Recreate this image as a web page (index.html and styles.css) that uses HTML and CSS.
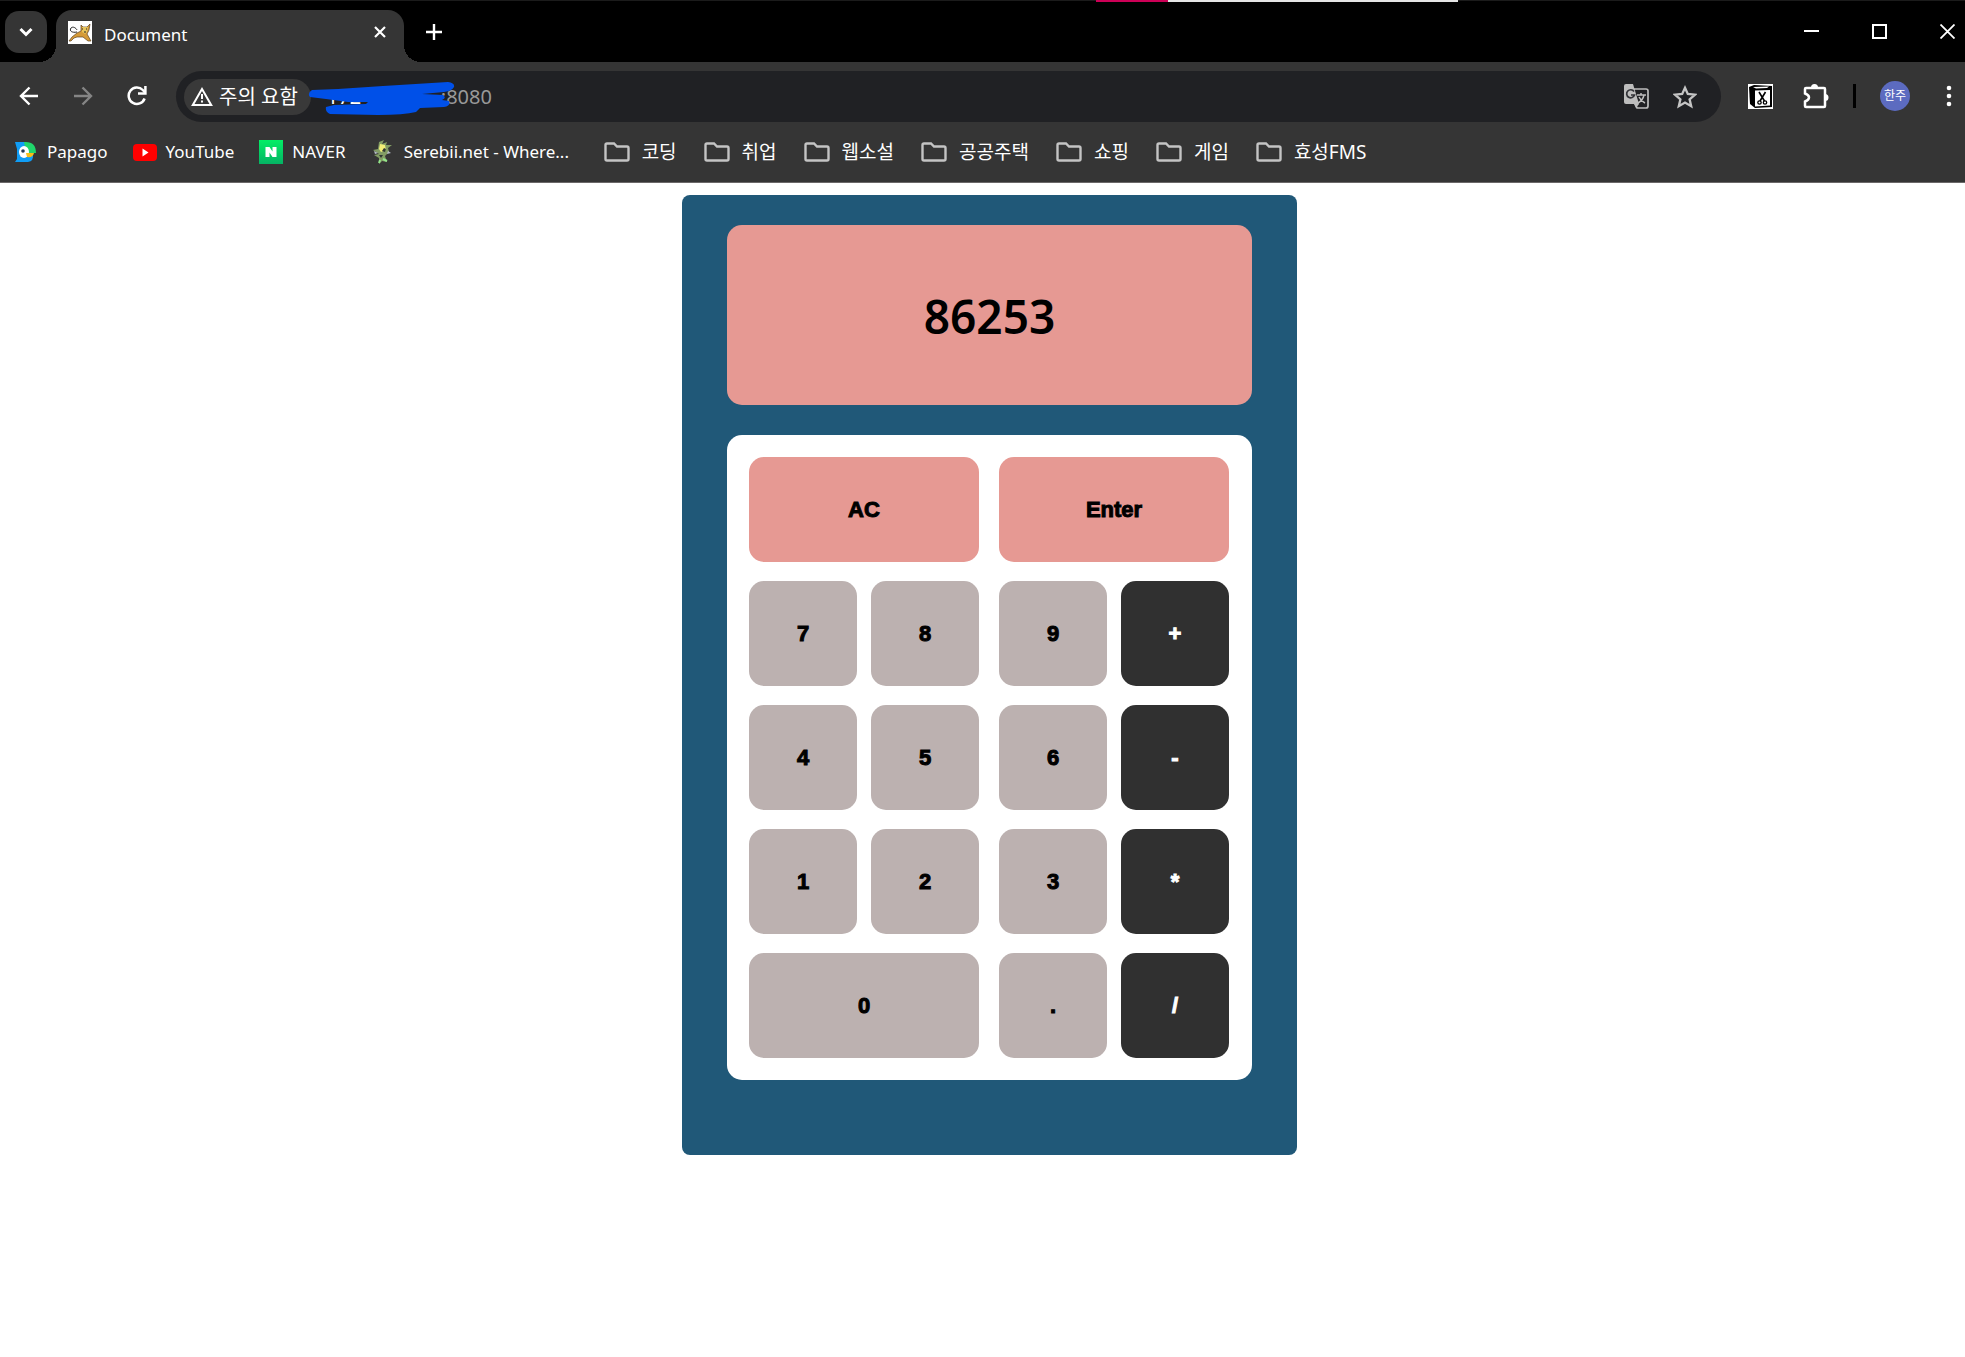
FILE: index.html
```html
<!DOCTYPE html>
<html lang="ko">
<head>
<meta charset="utf-8">
<meta name="viewport" content="width=device-width, initial-scale=1">
<title>Document</title>
<link rel="stylesheet" href="styles.css">
</head>
<body>
<header class="browser">
  <div class="tab-strip">
    <div class="edge-strip"></div>
    <button class="tab-search" aria-label="탭 검색"><svg width="14" height="10" viewBox="0 0 14 10" fill="none" stroke="#fff" stroke-width="3"><path d="M1.5 2 7 7.5 12.5 2"/></svg></button>
    <div class="tab">
      <svg class="tab-icon" width="24" height="23" viewBox="0 0 24 23">
        <rect width="24" height="23" fill="#fff"/>
        <path d="M1 20 4 16 9 12 13 10 13 4 15 6H19L22 3 21 9 19 13 23 20H20L15 16 9 16 6 17 3 20Z" fill="#d59a38" stroke="#5d4423" stroke-width="0.7"/>
        <path d="M14 6h6l-1 5-2 2-3-2Z" fill="#e7c45c"/>
        <path d="M9 11C4 12 1 10 3 7 5 5 8 7 9 9M14 8h1M18 8h1M16 11h2" fill="none" stroke="#222"/>
      </svg>
      <span class="tab-title">Document</span>
      <button class="icon-button" aria-label="탭 닫기"><svg width="12" height="12" viewBox="0 0 12 12" stroke="#fff" stroke-width="2.2"><path d="M1 1 11 11M11 1 1 11"/></svg></button>
    </div>
    <button class="icon-button new-tab" aria-label="새 탭"><svg width="16" height="16" viewBox="0 0 16 16" stroke="#fff" stroke-width="2.4"><path d="M8 0V16M0 8H16"/></svg></button>
    <div class="window-controls">
      <button class="icon-button" aria-label="최소화"><svg width="15" height="15" viewBox="0 0 15 15"><path d="M0 6H15V8H0Z" fill="#fff"/></svg></button>
      <button class="icon-button" aria-label="최대화"><svg width="15" height="15" viewBox="0 0 15 15"><path d="M1 1H14V14H1Z" fill="none" stroke="#fff" stroke-width="2"/></svg></button>
      <button class="icon-button" aria-label="닫기"><svg width="15" height="15" viewBox="0 0 15 15" stroke="#fff" stroke-width="1.8"><path d="M.5.5 14.5 14.5M14.5.5.5 14.5"/></svg></button>
    </div>
  </div>

  <div class="toolbar">
    <div class="navigation">
      <button class="icon-button" aria-label="뒤로"><svg width="20" height="20" viewBox="0 0 20 20" fill="none" stroke="#fff" stroke-width="2.4"><path d="M19 10H2.5M10.5 1.5 2 10 10.5 18.5"/></svg></button>
      <button class="icon-button" aria-label="앞으로"><svg width="20" height="20" viewBox="0 0 20 20" fill="none" stroke="#858585" stroke-width="2.4"><path d="M1 10H17.5M9.5 1.5 18 10 9.5 18.5"/></svg></button>
      <button class="icon-button" aria-label="새로고침"><svg width="20" height="20" viewBox="0 0 20 20" fill="none" stroke="#fff" stroke-width="2.5"><path d="M17.6 12.5A8.2 8.2 0 1 1 15.8 4L18 6.3"/><path d="M18.4 0V7.4H11"/></svg></button>
    </div>
    <div class="address-bar">
      <button class="site-info"><svg width="22" height="20" viewBox="0 0 22 20"><path d="M11 2 20.2 18H1.8Z" fill="none" stroke="#fff" stroke-width="2"/><path d="M10 7h2v5h-2ZM10 13.5h2v2h-2Z" fill="#fff"/></svg><span>주의 요함</span></button>
      <div class="url">
        <span class="host">172</span><span class="port">:8080</span>
        <svg class="scribble" width="148" height="36" viewBox="0 0 148 36" fill="#0050e8">
          <path d="M4 8 30 7 75 4 140 0Q147 1 146 5 144 9 136 10L114 12 135 13Q139 16 134 18L141 19Q143 24 136 25L112 26 108 30Q96 33 70 33L22 32Q17 30 18 25L26 23 58 22 60 20 40 20 18 17 2 15Q-1 11 4 8Z"/>
        </svg>
      </div>
      <button class="icon-button" aria-label="번역"><svg width="25" height="25" viewBox="0 0 25 25"><path d="M10 5H22Q24 5 24 7V22Q24 24 22 24H13L10 17Z" fill="none" stroke="#bdbdbd" stroke-width="1.7"/><path d="M2 0H9L15 20H2Q0 20 0 18V2Q0 0 2 0Z" fill="#bdbdbd"/><path d="M10 7.5A4 4 0 1 0 10.5 11H7" fill="none" stroke="#303136" stroke-width="1.7"/><path d="M13 11H22M17 9v2M20 11Q19 16 14 19M15 13Q17 17 21 19" fill="none" stroke="#bdbdbd" stroke-width="1.5"/><path d="M10 20h5l-3 4Z" fill="#bdbdbd"/></svg></button>
      <button class="icon-button" aria-label="북마크 추가"><svg width="24" height="24" viewBox="0 0 24 24"><path d="M12 2.8 14.8 9 22 9.7 16.6 14.3 18.2 21.2 12 17.5 5.8 21.2 7.4 14.3 2 9.7 9.2 9Z" fill="none" stroke="#c4c4c4" stroke-width="2.3"/></svg></button>
    </div>
    <div class="extensions">
      <button class="icon-button" aria-label="캡처"><svg width="25" height="25" viewBox="0 0 25 25"><rect width="25" height="25" fill="#fff"/><path d="M1 3 6 1 24 2V23L7 24 2 20Z" fill="#000"/><path d="M5 3 21 2.500 19 4 8 4.500ZM7 6.500 22 6V21.500L7 22.500Z" fill="#fff"/><path d="M11 8 16.500 17M17.500 8 12 17" stroke="#000" stroke-width="1.6"/><circle cx="11.500" cy="18.500" r="1.700" fill="none" stroke="#000" stroke-width="1.300"/><circle cx="17" cy="18.500" r="1.700" fill="none" stroke="#000" stroke-width="1.300"/></svg></button>
      <button class="icon-button" aria-label="확장 프로그램"><svg width="26" height="26" viewBox="0 0 26 26"><path d="M3 5H21Q22 5 22 6V23Q22 24 21 24H3Q2 24 2 23V18.5Q6 17 6 14.5T2 10.500V6Q2 5 3 5Z" fill="none" stroke="#fff" stroke-width="2.5"/><path d="M8 4.500A3.500 3.500 0 0 1 15 4.500ZM22 11A3.500 3.500 0 0 1 22 18Z" fill="#fff"/></svg></button>
      <span class="divider"></span>
      <button class="avatar">한주</button>
      <button class="icon-button" aria-label="메뉴"><svg width="6" height="22" viewBox="0 0 6 22" fill="#fff"><circle cx="3" cy="3" r="2.300"/><circle cx="3" cy="11" r="2.300"/><circle cx="3" cy="19" r="2.300"/></svg></button>
    </div>
  </div>

  <nav class="bookmarks">
    <a href="#"><svg width="24" height="24" viewBox="0 0 24 24"><path d="M1 2H11L19 14Q20 21 14 22H1L3 19V9Z" fill="#109df5"/><path d="M10 2Q22 1 22 13H12Z" fill="#20d66b"/><ellipse cx="10" cy="12" rx="5" ry="6" fill="#fff"/><path d="M12 13H20Q19 18 13 17Z" fill="#f9bd16"/><circle cx="9" cy="11" r="1.800" fill="#263a53"/></svg><span>Papago</span></a>
    <a href="#"><svg width="24" height="24" viewBox="0 0 24 24"><rect y="4" width="24" height="17" rx="4" fill="#f00"/><path d="M9.500 8.500 15.500 12.500 9.500 16.500Z" fill="#fff"/></svg><span>YouTube</span></a>
    <a href="#"><svg width="24" height="24" viewBox="0 0 24 24"><defs><linearGradient id="green" x2="0" y2="1"><stop stop-color="#03ee65"/><stop offset="1" stop-color="#05b364"/></linearGradient></defs><rect width="24" height="24" fill="url(#green)"/><path d="M6.500 7H10.500L13.500 11.500V7H17.500V17H13.500L10.500 12.500V17H6.500Z" fill="#fff"/></svg><span>NAVER</span></a>
    <a class="long-title" href="#"><svg width="24" height="24" viewBox="0 0 24 24"><path d="M8 2 13 0 11 4 16 2 15 5 21 5 17 8 18 12 14 16 16 22 11 21 8 24 8 18 3 15 8 14 2 10 7 9Z" fill="#829c64"/><path d="M9 4 14 5 15 10 10 12 8 9Z" fill="#f3ef77"/><path d="M13 8 15 9 14 12 11 11ZM8 15h4l-2 3Z" fill="#303834"/><path d="M17 11 20 13 16 14ZM3 11l4 2-3 1Z" fill="#b6bdc8"/><path d="M12 19 16 21M9 20l-1 3" stroke="#93e68b" stroke-width="2"/></svg><span>Serebii.net - Where...</span></a>
    <a class="folder" href="#"><svg width="26" height="20" viewBox="0 0 26 20"><path d="M3 1.500H10L13 4.500H23Q24.500 4.500 24.500 6V17Q24.500 18.500 23 18.500H3Q1.500 18.500 1.500 17V3Q1.500 1.500 3 1.500Z"/></svg><span>코딩</span></a>
    <a class="folder" href="#"><svg width="26" height="20" viewBox="0 0 26 20"><path d="M3 1.500H10L13 4.500H23Q24.500 4.500 24.500 6V17Q24.500 18.500 23 18.500H3Q1.500 18.500 1.500 17V3Q1.500 1.500 3 1.500Z"/></svg><span>취업</span></a>
    <a class="folder" href="#"><svg width="26" height="20" viewBox="0 0 26 20"><path d="M3 1.500H10L13 4.500H23Q24.500 4.500 24.500 6V17Q24.500 18.500 23 18.500H3Q1.500 18.500 1.500 17V3Q1.500 1.500 3 1.500Z"/></svg><span>웹소설</span></a>
    <a class="folder" href="#"><svg width="26" height="20" viewBox="0 0 26 20"><path d="M3 1.500H10L13 4.500H23Q24.500 4.500 24.500 6V17Q24.500 18.500 23 18.500H3Q1.500 18.500 1.500 17V3Q1.500 1.500 3 1.500Z"/></svg><span>공공주택</span></a>
    <a class="folder" href="#"><svg width="26" height="20" viewBox="0 0 26 20"><path d="M3 1.500H10L13 4.500H23Q24.500 4.500 24.500 6V17Q24.500 18.500 23 18.500H3Q1.500 18.500 1.500 17V3Q1.500 1.500 3 1.500Z"/></svg><span>쇼핑</span></a>
    <a class="folder" href="#"><svg width="26" height="20" viewBox="0 0 26 20"><path d="M3 1.500H10L13 4.500H23Q24.500 4.500 24.500 6V17Q24.500 18.500 23 18.500H3Q1.500 18.500 1.500 17V3Q1.500 1.500 3 1.500Z"/></svg><span>게임</span></a>
    <a class="folder" href="#"><svg width="26" height="20" viewBox="0 0 26 20"><path d="M3 1.500H10L13 4.500H23Q24.500 4.500 24.500 6V17Q24.500 18.500 23 18.500H3Q1.500 18.500 1.500 17V3Q1.500 1.500 3 1.500Z"/></svg><span>효성FMS</span></a>
  </nav>
</header>

<main class="page">
  <section class="calculator">
    <output class="display">86253</output>
    <div class="keypad">
      <div class="row"><button class="key action">AC</button><button class="key action">Enter</button></div>
      <div class="row"><div class="pair"><button class="key">7</button><button class="key">8</button></div><div class="pair"><button class="key">9</button><button class="key operator">+</button></div></div>
      <div class="row"><div class="pair"><button class="key">4</button><button class="key">5</button></div><div class="pair"><button class="key">6</button><button class="key operator">-</button></div></div>
      <div class="row"><div class="pair"><button class="key">1</button><button class="key">2</button></div><div class="pair"><button class="key">3</button><button class="key operator">*</button></div></div>
      <div class="row"><button class="key">0</button><div class="pair"><button class="key">.</button><button class="key operator">/</button></div></div>
    </div>
  </section>
</main>
</body>
</html>
```
FILE: styles.css
```css
* {
  box-sizing: border-box;
}

body {
  margin: 0;
  background: #fff;
  font-family: "Noto Sans", "Noto Sans CJK KR", sans-serif;
}

button {
  margin: 0;
  padding: 0;
  border: 0;
  font-family: inherit;
  color: inherit;
}

svg {
  display: block;
  flex: none;
}

.browser {
  background: #353535;
  color: #fff;
  border-bottom: 1px solid #6b6869;
}

.icon-button {
  display: flex;
  align-items: center;
  justify-content: center;
  background: none;
}

/* Tab strip */
.tab-strip {
  position: relative;
  display: flex;
  height: 62px;
  padding: 9px 10px 0 5px;
  border-top: 1px solid #1b1b1b;
  background: #000;
}

.edge-strip {
  position: absolute;
  top: -1px;
  left: 1096px;
  width: 362px;
  height: 2px;
  background: linear-gradient(90deg, #cc0056 72px, #e5e5e5 72px);
}

.tab-search {
  display: flex;
  align-items: center;
  justify-content: center;
  width: 42px;
  height: 42px;
  margin: 1px 9px 0 0;
  border-radius: 14px;
  background: #353535;
}

.tab {
  position: relative;
  display: flex;
  align-items: center;
  gap: 12px;
  width: 348px;
  padding: 0 18px 8px 12px;
  border-radius: 16px 16px 0 0;
  background: #353535;
}

.tab::before,
.tab::after {
  content: "";
  position: absolute;
  bottom: 0;
  width: 17px;
  height: 17px;
}

.tab::before {
  right: 100%;
  background: radial-gradient(circle at 0 0, transparent 17px, #353535 17px);
}

.tab::after {
  left: 100%;
  background: radial-gradient(circle at 100% 0, transparent 17px, #353535 17px);
}

.tab-title {
  flex: 1;
  padding-top: 5px;
  font-size: 17px;
  line-height: 24px;
}

.new-tab {
  width: 32px;
  height: 44px;
  margin-left: 14px;
}

.window-controls {
  display: flex;
  gap: 53px;
  height: 42px;
  margin-left: auto;
}

/* Toolbar */
.toolbar {
  display: flex;
  align-items: center;
  height: 68px;
  padding: 0 13px 0 19px;
}

.navigation {
  display: flex;
  gap: 34px;
  margin-right: 29px;
}

.address-bar {
  display: flex;
  flex: 1;
  align-items: center;
  gap: 24px;
  height: 51px;
  margin-top: 1px;
  padding: 0 24px 0 8px;
  border-radius: 26px;
  background: #202124;
}

.site-info {
  display: flex;
  align-items: center;
  gap: 6px;
  height: 36px;
  padding: 0 13px 0 7px;
  border-radius: 18px;
  background: #393939;
  font-size: 20px;
  line-height: 24px;
}

.url {
  position: relative;
  display: flex;
  flex: 1;
  margin-left: -8px;
  font-size: 20px;
  line-height: 24px;
}

.host {
  width: 114px;
}

.port {
  color: #999;
}

.scribble {
  position: absolute;
  top: -3px;
  left: -19px;
}

.extensions {
  display: flex;
  align-items: center;
  margin-left: 27px;
}

.extensions .icon-button + .icon-button {
  margin-left: 30px;
}

.divider {
  width: 3px;
  height: 24px;
  margin: 0 24px;
  background: #000;
}

.avatar {
  width: 30px;
  height: 30px;
  margin-right: 36px;
  border-radius: 50%;
  background: #5c6bc0;
  font-size: 12px;
  line-height: 30px;
}

/* Bookmarks */
.bookmarks {
  display: flex;
  align-items: center;
  gap: 25px;
  height: 52px;
  padding: 0 14px 8px;
  overflow: hidden;
}

.bookmarks a {
  display: flex;
  flex: none;
  align-items: center;
  gap: 9px;
  color: inherit;
  font-size: 17px;
  line-height: 24px;
  text-decoration: none;
}

.bookmarks .long-title {
  width: 208px;
}

.bookmarks .folder {
  gap: 12px;
  padding-right: 2px;
  font-size: 19px;
}

.folder svg {
  fill: none;
  stroke: #c4c4c4;
  stroke-width: 2.4;
}

/* Calculator; the left padding balances the window edge hidden on the right */
.page {
  padding: 12px 0 12px 14px;
}

.calculator {
  max-width: 615px;
  margin: 0 auto;
  padding: 30px 45px 75px;
  border-radius: 8px;
  background: #205878;
}

.display {
  display: flex;
  align-items: center;
  justify-content: center;
  height: 180px;
  margin-bottom: 30px;
  padding-top: 2px;
  border-radius: 15px;
  background: #e69993;
  color: #000;
  font-size: 46px;
  font-weight: 600;
}

.keypad {
  display: flex;
  flex-direction: column;
  gap: 19px;
  padding: 22px 23px 22px 22px;
  border-radius: 15px;
  background: #fff;
}

.row,
.pair {
  display: flex;
  gap: 20px;
}

.row > * {
  flex: 1;
}

.pair {
  gap: 14px;
}

.key {
  flex: 1;
  height: 105px;
  border-radius: 15px;
  background: #bcb1b0;
  color: #000;
  font-family: "Liberation Sans", sans-serif;
  font-size: 22px;
  font-weight: 700;
  -webkit-text-stroke: 1px currentColor;
}

.action {
  background: #e69993;
}

.operator {
  background: #303030;
  color: #fff;
}
```
